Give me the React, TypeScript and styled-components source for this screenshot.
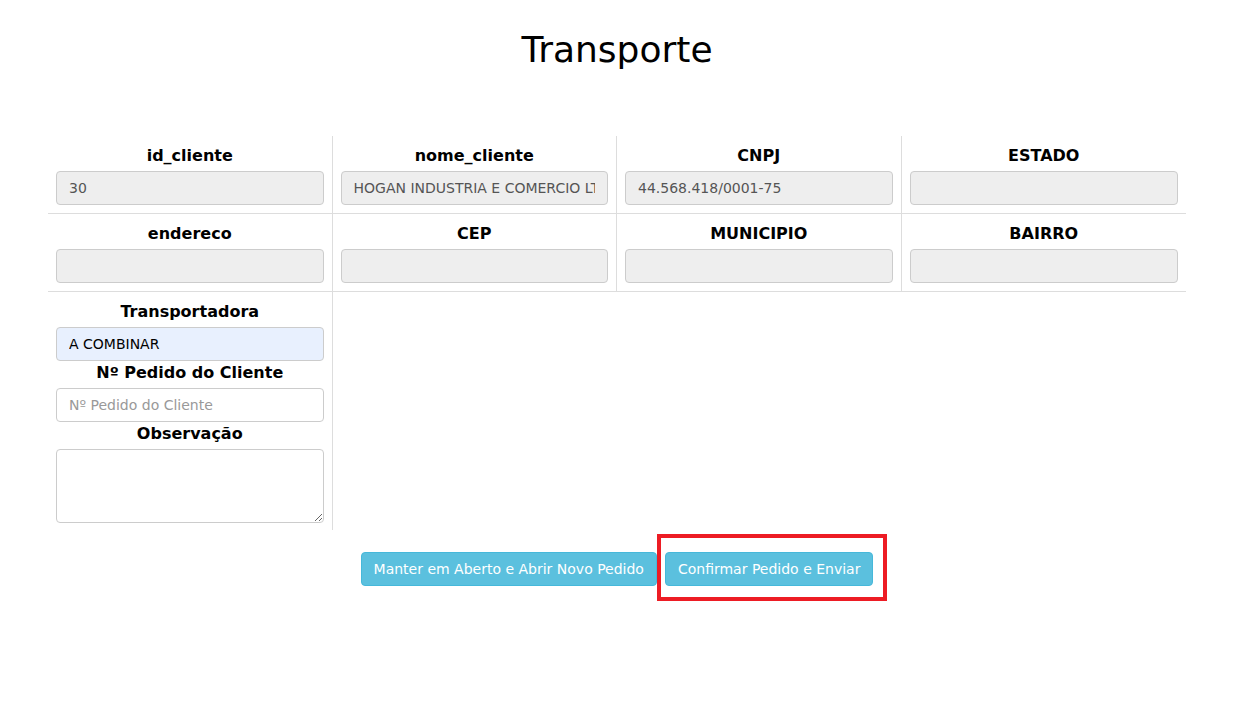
import React from "react";
import styled, { createGlobalStyle } from "styled-components";

const Global = createGlobalStyle`
  html, body { margin: 0; padding: 0; background: #fff; }
  body { font-family: "DejaVu Sans", Verdana, sans-serif; color: #000; }
`;

const Page = styled.div`
  width: 1234px;
  padding: 27px 0 60px;
  display: flex;
  flex-direction: column;
  align-items: center;
`;

const Title = styled.h1`
  margin: 0;
  font-size: 36px;
  font-weight: normal;
  line-height: 46px;
`;

const Table = styled.div`
  margin-top: 63px;
  width: 1138px;
  display: grid;
  grid-template-columns: repeat(4, 1fr);
`;

const Cell = styled.div<{ $lastCol?: boolean; $lastRow?: boolean }>`
  padding: 8px 8px ${(p) => (p.$lastRow ? "7px" : "8px")};
  border-right: ${(p) => (p.$lastCol ? "none" : "1px solid #ddd")};
  border-bottom: ${(p) => (p.$lastRow ? "none" : "1px solid #ddd")};
  display: flex;
  flex-direction: column;
`;

const Label = styled.label`
  font-weight: bold;
  font-size: 16px;
  line-height: 23px;
  padding-bottom: 4px;
  text-align: center;
`;

const Input = styled.input<{ $auto?: boolean }>`
  box-sizing: border-box;
  height: 34px;
  width: 100%;
  padding: 6px 12px;
  font-family: "DejaVu Sans", Verdana, sans-serif;
  font-size: 14px;
  color: ${(p) => (p.$auto ? "#000" : "#555")};
  background: ${(p) => (p.$auto ? "#e8f0fe" : "#eee")};
  border: 1px solid #ccc;
  border-radius: 4px;
  outline: none;
  &:not(:disabled) {
    background: ${(p) => (p.$auto ? "#e8f0fe" : "#fff")};
  }
  &::placeholder { color: #999; }
`;

const TextArea = styled.textarea`
  box-sizing: border-box;
  height: 74px;
  width: 100%;
  padding: 6px 12px;
  font-family: "DejaVu Sans", Verdana, sans-serif;
  font-size: 14px;
  border: 1px solid #ccc;
  border-radius: 4px;
  resize: vertical;
  display: block;
`;

const Buttons = styled.div`
  margin-top: 22px;
  display: flex;
  gap: 8px;
`;

const Marked = styled.div`
  position: relative;
  display: flex;
`;

const Btn = styled.button`
  height: 34px;
  padding: 0 12px;
  background: #5bc0de;
  border: 1px solid #46b8da;
  border-radius: 4px;
  color: #fff;
  font-family: "DejaVu Sans", Verdana, sans-serif;
  font-size: 14px;
  cursor: pointer;
`;

const Highlight = styled.span`
  position: absolute;
  top: -18px;
  left: -8px;
  right: -14px;
  bottom: -15px;
  border: 4px solid #ed1c24;
  pointer-events: none;
`;

const fields = [
  { label: "id_cliente", value: "30" },
  { label: "nome_cliente", value: "HOGAN INDUSTRIA E COMERCIO LTDA" },
  { label: "CNPJ", value: "44.568.418/0001-75" },
  { label: "ESTADO", value: "" },
  { label: "endereco", value: "" },
  { label: "CEP", value: "" },
  { label: "MUNICIPIO", value: "" },
  { label: "BAIRRO", value: "" },
];

export default function App() {
  return (
    <>
      <Global />
      <Page>
        <Title>Transporte</Title>
        <Table>
          {fields.map((f, i) => (
            <Cell key={f.label} $lastCol={i % 4 === 3}>
              <Label>{f.label}</Label>
              <Input disabled value={f.value} readOnly />
            </Cell>
          ))}
          <Cell $lastRow>
            <Label>Transportadora</Label>
            <Input $auto defaultValue="A COMBINAR" />
            <Label>Nº Pedido do Cliente</Label>
            <Input placeholder="Nº Pedido do Cliente" />
            <Label>Observação</Label>
            <TextArea />
          </Cell>
        </Table>
        <Buttons>
          <Btn>Manter em Aberto e Abrir Novo Pedido</Btn>
          <Marked>
            <Btn>Confirmar Pedido e Enviar</Btn>
            <Highlight />
          </Marked>
        </Buttons>
      </Page>
    </>
  );
}
